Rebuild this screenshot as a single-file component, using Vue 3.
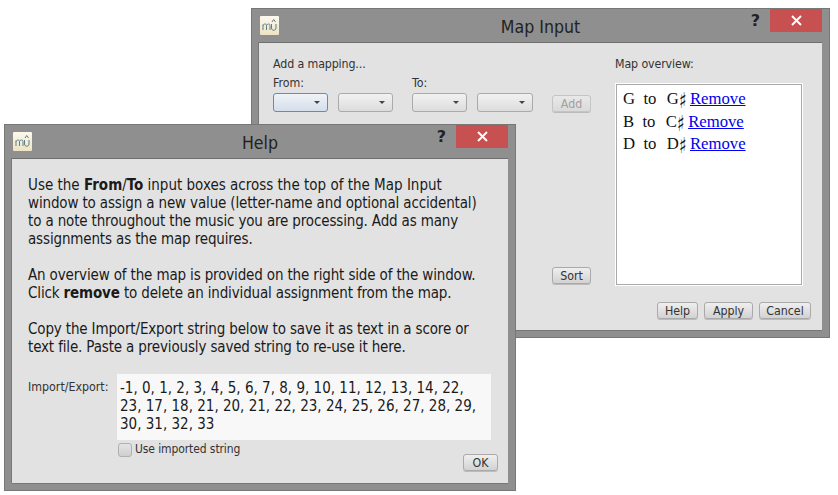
<script setup>
const mappings = [
  { from: 'G', to: 'G' },
  { from: 'B', to: 'C' },
  { from: 'D', to: 'D' },
]
const combos = [
  [{ focus: true, w: 55 }, { focus: false, w: 55 }],
  [{ focus: false, w: 55 }, { focus: false, w: 56 }],
]
</script>

<template>
  <div class="desktop">
    <section class="window map">
      <header class="titlebar">
        <span class="appicon"><svg width="19" height="19" viewBox="0 0 19 19"><path d="M3 14V8.5M3 9.5C4 7.5 6.5 7.5 6.5 9.5V14M6.5 9.5C7.5 7.5 10 7.5 10 9.5V14M11.5 8V12C11.500 15 16 15 16 12V8M12 6L13.700 3.500L15.500 6" fill="none" stroke="#5a7f8c" stroke-width="1"/></svg></span>
        <h1>Map Input</h1>
        <span class="help-mark">?</span>
        <button class="close" aria-label="Close"><svg width="11" height="11" viewBox="0 0 11 11"><path d="M1 1L10 10M10 1L1 10" stroke="#fff" stroke-width="2"/></svg></button>
      </header>
      <div class="client map-client">
        <div class="map-left">
          <div class="lbl tight add-lbl">Add a mapping...</div>
          <div class="from-to">
            <div v-for="(group, g) in combos" :key="g" class="group">
              <div class="lbl">{{ g === 0 ? 'From:' : 'To:' }}</div>
              <div class="combos">
                <div v-for="(c, i) in group" :key="i" class="combo" :class="{ focus: c.focus }" :style="{ width: c.w + 'px' }"><i></i></div>
              </div>
            </div>
            <button class="btn disabled add">Add</button>
          </div>
          <button class="btn sort">Sort</button>
        </div>
        <div class="map-right">
          <div class="lbl tight">Map overview:</div>
          <div class="listbox">
            <div v-for="m in mappings" :key="m.from" class="row">{{ m.from }}&nbsp; to&nbsp; <span class="note">{{ m.to }}</span><span class="sharp">♯</span>&nbsp;<a href="#">Remove</a></div>
          </div>
          <div class="actions">
            <button class="btn b-help">Help</button>
            <button class="btn b-apply">Apply</button>
            <button class="btn b-cancel">Cancel</button>
          </div>
        </div>
      </div>
    </section>

    <section class="window help">
      <header class="titlebar">
        <span class="appicon"><svg width="19" height="19" viewBox="0 0 19 19"><path d="M3 14V8.5M3 9.5C4 7.5 6.5 7.5 6.5 9.5V14M6.5 9.5C7.5 7.5 10 7.5 10 9.5V14M11.5 8V12C11.500 15 16 15 16 12V8M12 6L13.700 3.500L15.500 6" fill="none" stroke="#5a7f8c" stroke-width="1"/></svg></span>
        <h1>Help</h1>
        <span class="help-mark">?</span>
        <button class="close" aria-label="Close"><svg width="11" height="11" viewBox="0 0 11 11"><path d="M1 1L10 10M10 1L1 10" stroke="#fff" stroke-width="2"/></svg></button>
      </header>
      <div class="client help-client">
        <p><span class="wide">Use the <b>From</b>/<b>To</b> input boxes across the top of the Map Input</span><br>window to assign a new value (letter-name and optional accidental)<br>to a note throughout the music you are processing. Add as many<br>assignments as the map requires.</p>
        <p>An overview of the map is provided on the right side of the window.<br>Click <b>remove</b> to delete an individual assignment from the map.</p>
        <p>Copy the Import/Export string below to save it as text in a score or<br>text file. Paste a previously saved string to re-use it here.</p>
        <div class="io">
          <div class="lbl io-lbl">Import/Export:</div>
          <div class="io-text">-1, 0, 1, 2, 3, 4, 5, 6, 7, 8, 9, 10, 11, 12, 13, 14, 22,<br>23, 17, 18, 21, 20, 21, 22, 23, 24, 25, 26, 27, 28, 29,<br>30, 31, 32, 33</div>
        </div>
        <label class="check"><span class="box"></span><span class="lbl check-lbl">Use imported string</span></label>
        <div class="ok-row"><button class="btn ok">OK</button></div>
      </div>
    </section>
  </div>
</template>

<style>
html, body { margin: 0; background: #fff; }
</style>

<style scoped>
.desktop {
  position: relative;
  width: 838px;
  height: 495px;
  overflow: hidden;
  background: #fff;
  font-family: "DejaVu Sans Condensed", "DejaVu Sans", sans-serif;
  color: #1a1a1a;
}
.window {
  position: absolute;
  box-sizing: border-box;
  background: #8f8f8f;
  border: 1px solid #777;
  padding: 0 7px 7px;
  display: flex;
  flex-direction: column;
}
.map { left: 251px; top: 8px; width: 579px; height: 330px; }
.help { left: 4px; top: 124px; width: 512px; height: 367px; }
.titlebar {
  position: relative;
  height: 33px;
  flex: none;
  display: flex;
  align-items: center;
  justify-content: center;
}
.titlebar h1 {
  margin: 2px 0 0;
  font-size: 17.6px;
  font-weight: 400;
  color: #222;
}
.appicon {
  position: absolute;
  left: 1px;
  top: 7px;
  width: 19px;
  height: 19px;
  background: linear-gradient(#fbf8ee, #efe3c4);
  border-radius: 1px;
}
.appicon svg { display: block; }
.help-mark {
  position: absolute;
  right: 62px;
  top: 2px;
  font: 700 16px "DejaVu Sans", sans-serif;
  color: #222;
}
.close {
  position: absolute;
  right: 0;
  top: 0;
  width: 52px;
  height: 23px;
  padding: 0;
  border: 0;
  background: #c75050;
  display: flex;
  align-items: center;
  justify-content: center;
}
.client {
  flex: 1;
  background: #e2e2e2;
  border-top: 1px solid #6f6f6f;
  box-shadow: -1px 0 0 #777, 0 1px 0 #777;
  min-height: 0;
}
.lbl { font-size: 12.3px; line-height: 15px; color: #333; }
.tight { letter-spacing: -0.12px; }
.btn {
  box-sizing: border-box;
  height: 17px;
  padding: 0;
  font: 12.3px "DejaVu Sans Condensed", "DejaVu Sans", sans-serif;
  color: #333;
  border: 1px solid #aaa;
  border-radius: 3px;
  background: linear-gradient(#efefef, #d2d2d2);
  box-shadow: 0 1px 0 #bbb;
}
.btn.disabled { color: #a0a0a0; border-color: #c4c4c4; background: linear-gradient(#e8e8e8, #dadada); }

.map-client { display: flex; }
.map-left {
  width: 342px;
  padding: 14px 0 0 14px;
  box-sizing: border-box;
  display: flex;
  flex-direction: column;
}
.add-lbl { margin-bottom: 4px; }
.from-to { display: flex; }
.group { margin-right: 19px; }
.combos { display: flex; gap: 10px; margin-top: 2px; }
.combo {
  box-sizing: border-box;
  height: 19px;
  position: relative;
  border: 1px solid #aaa;
  border-radius: 3px;
  background: linear-gradient(#f2f2f2, #dcdcdc);
}
.combo.focus { border-color: #5b8fc4; background: linear-gradient(#eff3f8, #d5deea); }
.combo i {
  position: absolute;
  right: 7px;
  top: 7px;
  width: 0;
  height: 0;
  border: 3px solid transparent;
  border-top: 3px solid #444;
  border-bottom: 0;
}
.add { width: 39px; margin: 19px 0 0; }
.sort { width: 39px; margin: 155px 0 0 279px; }

.map-right {
  flex: 1;
  padding: 14px 0 0 14px;
  box-sizing: border-box;
}
.listbox {
  box-sizing: border-box;
  width: 188px;
  height: 203px;
  padding: 3px 6px;
  margin-top: 11px;
  background: #fff;
  border: 2px solid #fff;
  outline: 1px solid #aaa;
  outline-offset: -2px;
  font: 16.700px/22.500px "Liberation Serif", serif;
  color: #111;
}
.row { white-space: nowrap; height: 22.500px; }
.note { margin-left: 2px; }
.sharp {
  display: inline-block;
  width: 7px;
  font-family: "DejaVu Sans", serif;
  font-size: 22px;
  line-height: 18px;
  vertical-align: -4px;
  transform: scaleX(0.7);
  transform-origin: left center;
}
.listbox a { color: #0000ee; }
.actions { display: flex; justify-content: flex-end; gap: 6px; width: 196px; margin-top: 16px; }
.b-help { width: 41px; }
.b-apply { width: 49px; }
.b-cancel { width: 52px; }

.help-client {
  padding: 17px 8px 0 16px;
  box-sizing: border-box;
  font-size: 15px;
  line-height: 18px;
  color: #1a1a1a;
}
.help-client p { margin: 0 0 18px; white-space: nowrap; letter-spacing: -0.15px; }
.help-client .wide { letter-spacing: 0; }
.io { display: flex; margin-top: 7px; }
.io-lbl { width: 89px; padding-top: 6px; flex: none; }
.io-text {
  box-sizing: border-box;
  width: 374px;
  height: 66px;
  padding: 5px 3px;
  background: #f8f8f8;
  white-space: nowrap;
}
.check { display: flex; align-items: center; gap: 3px; margin: 2px 0 0 89px; }
.check-lbl { font-size: 12px; letter-spacing: -0.1px; }
.box {
  box-sizing: border-box;
  width: 14px;
  height: 14px;
  margin-left: 1px;
  border: 1px solid #b0b0b0;
  border-radius: 3px;
  background: linear-gradient(#e4e4e4, #cfcfcf);
}
.ok-row { display: flex; justify-content: flex-end; width: 470px; margin-top: -3px; }
.ok { width: 35px; }
</style>
